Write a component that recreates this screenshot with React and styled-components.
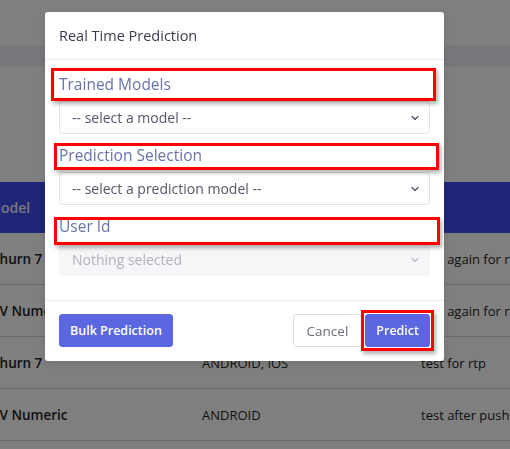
import React from "react";
import styled, { createGlobalStyle } from "styled-components";

const GlobalStyle = createGlobalStyle`
    html, body {
        margin: 0;
        padding: 0;
        overflow: hidden;
        background: #ffffff;
        font-family: "Open Sans", "Noto Sans", sans-serif;
    }
`;

const Page = styled.div`
    width: 510px;
    height: 449px;
    overflow: hidden;
    background: #ffffff;
`;

const NavBar = styled.div`
    height: 46px;
    background: #ffffff;
`;

const SubBar = styled.div`
    height: 20px;
    background: #eeedf6;
`;

const Content = styled.div`
    padding-top: 116px;
`;

const Table = styled.div`
    margin-left: -24px;
    width: 560px;
`;

const Row = styled.div`
    display: grid;
    grid-template-columns: 211px 219px 1fr;
    height: ${(p) => (p.$head ? "51px" : "52px")};
    align-items: center;
    background: ${(p) => (p.$head ? "#3e4cf0" : "transparent")};
    border-bottom: ${(p) => (p.$head ? "none" : "1px solid #cfdbea")};
    box-sizing: border-box;
`;

const Cell = styled.div`
    padding: 0 15px 0 ${(p) => (p.$head ? 12 : 15)}px;
    white-space: nowrap;
    overflow: hidden;
    font-size: ${(p) => (p.$head ? "14px" : p.$strong ? "13.5px" : "13px")};
    font-weight: ${(p) => (p.$strong ? 600 : 400)};
    color: ${(p) => (p.$head ? "#eef0ff" : "#1c1c1c")};
`;

const Backdrop = styled.div`
    position: fixed;
    inset: 0;
    background: rgba(0, 0, 0, 0.5);
    padding: 12px 0 0 45px;
`;

const Modal = styled.div`
    width: 399px;
    background: #ffffff;
    border-radius: 3px;
    box-shadow: 0 2px 8px rgba(0, 0, 0, 0.12);
`;

const ModalHeader = styled.div`
    height: 47px;
    padding: 0 14px;
    display: flex;
    align-items: center;
    border-bottom: 1px solid #e9e9ef;
    font-size: 14.5px;
    font-weight: 500;
    color: #3b3b4f;
`;

const ModalBody = styled.div`
    padding: 14px 14px 14px;
`;

const Group = styled.div`
    margin-bottom: ${(p) => (p.$last ? "10px" : "11px")};
`;

const Label = styled.label`
    position: relative;
    display: block;
    height: 21px;
    line-height: 21px;
    margin-bottom: 6px;
    font-size: 15.5px;
    color: #6873a8;

    &::after {
        content: "";
        position: absolute;
        top: ${(p) => p.$box[0]}px;
        right: ${(p) => p.$box[1]}px;
        bottom: ${(p) => p.$box[2]}px;
        left: ${(p) => p.$box[3]}px;
        border: 3px solid #ff0000;
        box-shadow: 2px 3px 4px rgba(0, 0, 0, 0.3);
        z-index: 2;
        pointer-events: none;
    }
`;

const Select = styled.div`
    height: 33px;
    box-sizing: border-box;
    display: flex;
    align-items: center;
    justify-content: space-between;
    padding: 0 10px 0 12px;
    border: 1px solid ${(p) => (p.$disabled ? "#f5f5f9" : "#e2e2ea")};
    border-radius: 4px;
    background: ${(p) => (p.$disabled ? "#f6f6f9" : "#ffffff")};
    font-size: 14px;
    color: ${(p) => (p.$disabled ? "#b2b2bc" : "#55556a")};
`;

const Chevron = ({ light }) => (
    <svg width="8" height="6" viewBox="0 0 8 6" fill="none">
        <path
            d="M1 1.5 L4 4.5 L7 1.5"
            stroke={light ? "#b8b8c2" : "#55556a"}
            strokeWidth="1.3"
            strokeLinecap="round"
            strokeLinejoin="round"
        />
    </svg>
);

const ModalFooter = styled.div`
    display: flex;
    align-items: center;
    gap: 3px;
    padding: 13px 14px 14px;
    border-top: 1px solid #e9e9ef;
`;

const Button = styled.button`
    position: relative;
    height: 33px;
    box-sizing: border-box;
    padding: 0 ${(p) => p.$pad}px;
    border-radius: 3px;
    font-family: inherit;
    font-size: ${(p) => (p.$primary ? "12.5px" : "13.5px")};
    cursor: pointer;
    border: 1px solid ${(p) => (p.$primary ? "#5b67e1" : "#dcdce4")};
    background: ${(p) => (p.$primary ? "#5b67e1" : "#ffffff")};
    color: ${(p) => (p.$primary ? "#ffffff" : "#6c6c7c")};
    font-weight: ${(p) => (p.$primary ? 600 : 400)};
`;

const Spacer = styled.div`
    flex: 1;
`;

const PredictButton = styled(Button)`
    &::after {
        content: "";
        position: absolute;
        inset: -5px;
        border: 3px solid #ff0000;
        box-shadow: 2px 3px 4px rgba(0, 0, 0, 0.3);
        pointer-events: none;
    }
`;

const rows = [
    { model: "Churn 7", platform: "ANDROID, IOS", note: "test again for rtp" },
    { model: "CV Numeric", platform: "ANDROID", note: "test again for rtp" },
    { model: "Churn 7", platform: "ANDROID, IOS", note: "test for rtp" },
    { model: "CV Numeric", platform: "ANDROID", note: "test after push campaign" },
];

export default function App() {
    return (
        <>
            <GlobalStyle />
            <Page>
                <NavBar />
                <SubBar />
                <Content>
                    <Table>
                        <Row $head>
                            <Cell $head $strong>
                                Model
                            </Cell>
                            <Cell $head $strong>
                                Platform
                            </Cell>
                            <Cell $head $strong />
                        </Row>
                        {rows.map((r, i) => (
                            <Row key={i}>
                                <Cell $strong>{r.model}</Cell>
                                <Cell>{r.platform}</Cell>
                                <Cell>{r.note}</Cell>
                            </Row>
                        ))}
                    </Table>
                </Content>
            </Page>
            <Backdrop>
                <Modal>
                    <ModalHeader>Real Time Prediction</ModalHeader>
                    <ModalBody>
                        <Group>
                            <Label $box={[-6, -6, -6, -8]}>Trained Models</Label>
                            <Select>
                                -- select a model --
                                <Chevron />
                            </Select>
                        </Group>
                        <Group>
                            <Label $box={[-2, -9, -4, -5]}>Prediction Selection</Label>
                            <Select>
                                -- select a prediction model --
                                <Chevron />
                            </Select>
                        </Group>
                        <Group $last>
                            <Label $box={[1, -10, -8, -5]}>User Id</Label>
                            <Select $disabled>
                                Nothing selected
                                <Chevron light />
                            </Select>
                        </Group>
                    </ModalBody>
                    <ModalFooter>
                        <Button $primary $pad={10}>
                            Bulk Prediction
                        </Button>
                        <Spacer />
                        <Button $pad={13}>Cancel</Button>
                        <PredictButton $primary $pad={10}>
                            Predict
                        </PredictButton>
                    </ModalFooter>
                </Modal>
            </Backdrop>
        </>
    );
}
